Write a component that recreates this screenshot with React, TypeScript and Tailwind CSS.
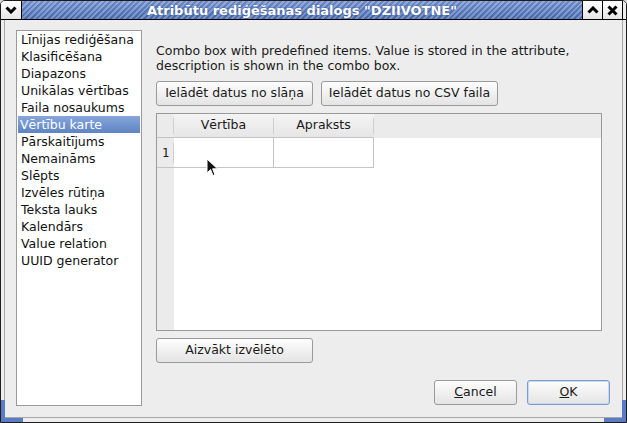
import React from "react";

const font = "font-['DejaVu_Sans',sans-serif]";

const widgets = [
    "Līnijas rediģēšana",
    "Klasificēšana",
    "Diapazons",
    "Unikālas vērtības",
    "Faila nosaukums",
    "Vērtību karte",
    "Pārskaitījums",
    "Nemaināms",
    "Slēpts",
    "Izvēles rūtiņa",
    "Teksta lauks",
    "Kalendārs",
    "Value relation",
    "UUID generator",
];

const Button = ({
    children,
    className = "",
    isDefault = false,
}: {
    children: React.ReactNode;
    className?: string;
    isDefault?: boolean;
}) => (
    <button
        className={`h-[25px] rounded-[3px] border text-[12.5px] text-[#1a1a1a] bg-[linear-gradient(#fdfdfd,#e4e4e4)] ${
            isDefault ? "border-[#7b9bd1] shadow-[inset_0_0_0_1px_#c9d7ef]" : "border-[#9a9a9a]"
        } ${className}`}
    >
        {children}
    </button>
);

const TitleButton = ({ children }: { children: React.ReactNode }) => (
    <div className="w-[20px] h-full flex items-center justify-center bg-[linear-gradient(#ffffff,#e6e6e6)] border-l border-black">
        {children}
    </div>
);

const App = () => {
    return (
        <div className={`relative w-[627px] h-[423px] bg-[#d8d8d8] ${font} overflow-hidden`}>
            <div className="w-full h-full flex flex-col border border-[#1c1c1c] rounded-t-[5px] overflow-hidden bg-[#ededed]">
                {/* title bar */}
                <div className="h-[19px] flex border-b border-black shrink-0">
                    <div className="w-[21px] h-full flex items-center justify-center bg-[linear-gradient(#ffffff,#e6e6e6)] border-r border-black">
                        <svg width="12" height="8" viewBox="0 0 12 8">
                            <path d="M1.5 1.5 L6 6 L10.5 1.5" stroke="black" strokeWidth="3" fill="none" />
                        </svg>
                    </div>
                    <div className="flex-1 h-full flex items-center justify-center bg-[linear-gradient(rgba(255,255,255,0.18),rgba(0,0,0,0.08)),repeating-linear-gradient(135deg,#7d9bd8_0px,#7d9bd8_2px,#4e6fb6_2px,#4e6fb6_4px)]">
                        <span className="text-white font-bold text-[13px] leading-none [text-shadow:0_0_2px_#2c4a8a]">
                            Atribūtu rediģēšanas dialogs "DZIIVOTNE"
                        </span>
                    </div>
                    <TitleButton>
                        <svg width="12" height="8" viewBox="0 0 12 8">
                            <path d="M1.5 6.5 L6 2 L10.5 6.5" stroke="black" strokeWidth="3" fill="none" />
                        </svg>
                    </TitleButton>
                    <TitleButton>
                        <svg width="11" height="11" viewBox="0 0 11 11">
                            <path d="M1.5 1.5 L9.5 9.5 M9.5 1.5 L1.5 9.5" stroke="black" strokeWidth="3" fill="none" />
                        </svg>
                    </TitleButton>
                    <div className="w-[4px] h-full bg-[#ededed] border-l border-black" />
                </div>

                {/* window frame */}
                <div className="flex-1 px-[3px] pb-[4px] flex">
                    <div className="flex-1 flex items-start border-x border-b border-[#a6a6a6] pl-[11px] pr-[12px]">
                        {/* widget type list */}
                        <div className="mt-[10px] w-[126px] h-[376px] border border-[#9a9a9a] bg-white shrink-0">
                            {widgets.map((w, i) =>
                                i === 5 ? (
                                    <div
                                        key={w}
                                        className="h-[17px] mx-[1px] pl-[2px] text-[12.5px] leading-[17px] text-white bg-[linear-gradient(#86a6db,#5f84c3)]"
                                    >
                                        {w}
                                    </div>
                                ) : (
                                    <div key={w} className="h-[17px] pl-[4px] text-[12.5px] leading-[17px] text-[#111]">
                                        {w}
                                    </div>
                                )
                            )}
                        </div>

                        {/* value map editor */}
                        <div className="flex-1 ml-[14px] pt-[23px] flex flex-col">
                            <p className="text-[12.5px] leading-[15px] text-[#1a1a1a]">
                                Combo box with predefined items. Value is stored in the attribute,
                                <br />
                                description is shown in the combo box.
                            </p>
                            <div className="flex gap-[8px] mt-[8px]">
                                <Button className="w-[157px]">Ielādēt datus no slāņa</Button>
                                <Button className="w-[177px]">Ielādēt datus no CSV faila</Button>
                            </div>

                            <div className="relative mt-[7px] w-[446px] h-[218px] border border-[#9a9a9a] bg-white flex flex-col">
                                <div className="h-[24px] flex bg-[#ebebeb] shrink-0">
                                    <div className="w-[17px] border-b border-[#c4c4c4] flex items-center justify-end">
                                        <div className="w-px h-[16px] bg-[#cfcfcf]" />
                                    </div>
                                    {["Vērtība", "Apraksts"].map((h) => (
                                        <div
                                            key={h}
                                            className="w-[100px] border-b border-[#c4c4c4] flex items-center bg-[linear-gradient(#f4f4f4,#e6e6e6)]"
                                        >
                                            <span className="flex-1 text-center text-[12.5px] text-[#1a1a1a]">{h}</span>
                                            <div className="w-px h-[16px] bg-[#cfcfcf]" />
                                        </div>
                                    ))}
                                </div>
                                <div className="flex-1 flex">
                                    <div className="w-[17px] bg-[#ebebeb]">
                                        <div className="h-[30px] flex items-center justify-between border-b border-[#c4c4c4] pl-[5px]">
                                            <span className="text-[12px] font-['DejaVu_Sans_Mono',monospace] text-[#1a1a1a]">1</span>
                                            <div className="w-px h-[20px] bg-[#cfcfcf]" />
                                        </div>
                                    </div>
                                    <div className="flex h-[30px]">
                                        <div className="w-[100px] border-r border-b border-[#c4c4c4]" />
                                        <div className="w-[100px] border-r border-b border-[#c4c4c4]" />
                                    </div>
                                </div>

                                {/* mouse pointer */}
                                <svg className="absolute left-[49px] top-[44px]" width="13" height="20" viewBox="0 0 13 20">
                                    <path
                                        d="M1 1 L1 15 L4.5 11.5 L7 17.5 L9 16.6 L6.6 10.8 L11.5 10.8 Z"
                                        fill="#111"
                                        stroke="#fff"
                                        strokeWidth="1"
                                        strokeLinejoin="round"
                                    />
                                </svg>
                            </div>

                            <Button className="w-[157px] mt-[7px]">Aizvākt izvēlēto</Button>

                            <div className="flex justify-end gap-[10px] mt-[17px]">
                                <Button className="w-[83px]">
                                    <span className="underline">C</span>ancel
                                </Button>
                                <Button className="w-[83px]" isDefault>
                                    <span className="underline">O</span>K
                                </Button>
                            </div>
                        </div>
                    </div>
                </div>
            </div>

            {/* blue corner grips */}
            <div className="absolute left-[1px] bottom-[1px] w-[22px] h-[22px] border-l-[4px] border-b-[4px] border-[#5b7cc4]" />
            <div className="absolute right-[1px] bottom-[1px] w-[22px] h-[22px] border-r-[4px] border-b-[4px] border-[#5b7cc4]" />
        </div>
    );
};

export default App;
